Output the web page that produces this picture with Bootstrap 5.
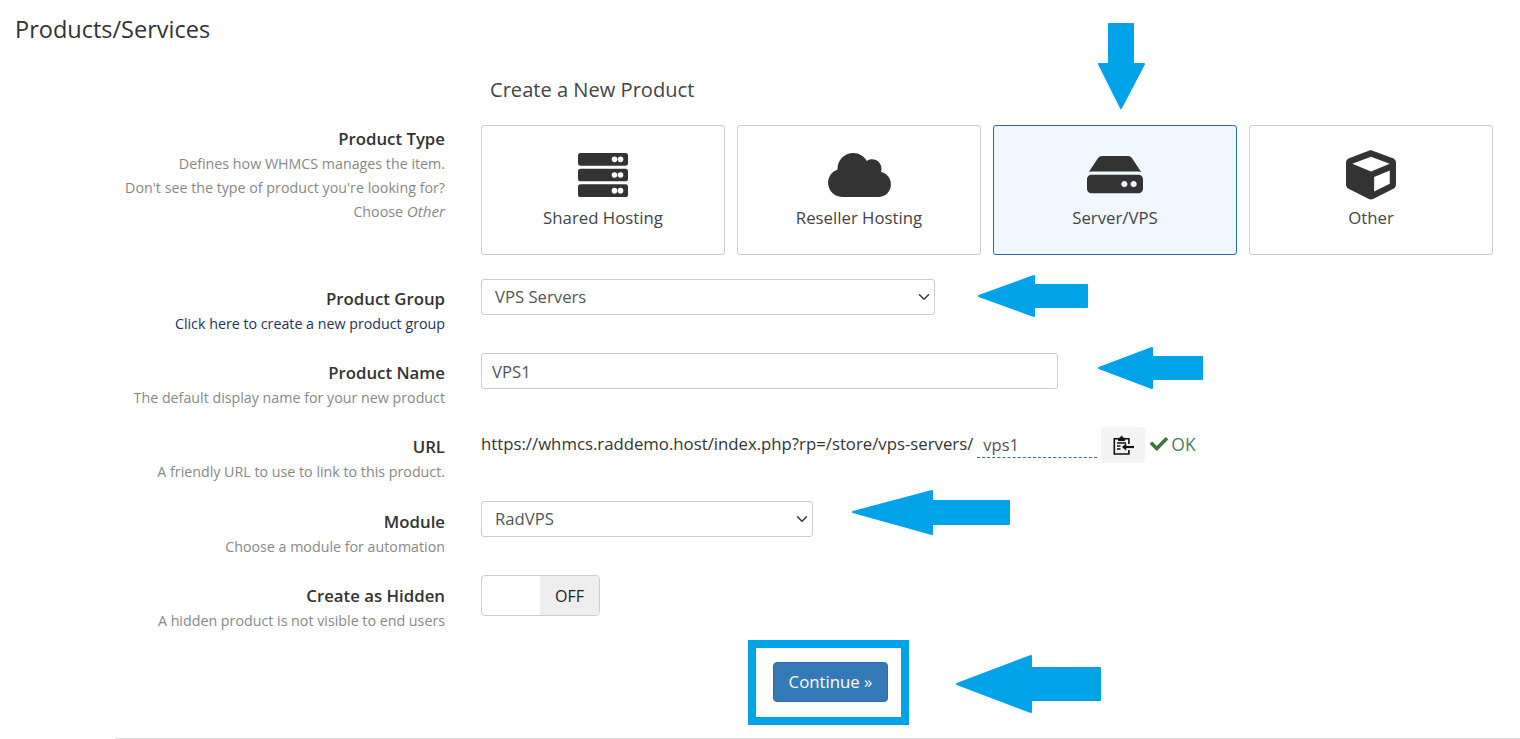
<!DOCTYPE html>
<html lang="en">
<head>
<meta charset="utf-8">
<title>Products/Services</title>
<link href="https://cdn.jsdelivr.net/npm/bootstrap@5.3.0/dist/css/bootstrap.min.css" rel="stylesheet">
<style>
html,body{height:739px;overflow:hidden;background:#fff}
body{font-family:"Open Sans",sans-serif;color:#333;font-size:16.8px;position:relative}
.page-title{font-size:23.5px;font-weight:400;line-height:34px;margin:0;padding:12px 0 0 15px;color:#333}
.form-area{margin-left:115px;padding-right:27px}
.new-title{font-size:20.1px;font-weight:400;line-height:28px;margin:30px 0 21px 375px;color:#444}
.frow{height:74px}
.frow-types{height:154px}
.frow-last{height:65px}
.lblcol{width:330px;flex:none;margin-right:36px;padding-top:7px;text-align:right;line-height:24px}
.lbl-top{padding-top:1px}
.lbl-low{padding-top:8px}
.lbl-name{font-weight:600;font-size:16.8px;color:#333;display:block;line-height:26px}
.lbl-sub{font-size:14.25px;color:#888;display:block;line-height:24px}
.lbl-sub em{font-size:15.2px;line-height:1}
.lbl-link{font-size:14.25px;color:#25305a;text-decoration:none;display:block;line-height:24px}
.fieldcol{flex:1;min-width:0}
.type-grid{display:grid;grid-template-columns:repeat(4,244px);gap:12px}
.type-tile{height:130px;border-color:#ccc;border-radius:3px;align-items:center;padding-top:24px;color:#444;font-size:16.8px}
.type-tile.is-picked{background:#f0f7ff;border-color:#2f6a9e}
.type-ico{height:50px;display:flex;align-items:center;justify-content:center}
.type-ico svg{display:block;fill:#333}
.type-lbl{line-height:24px;margin-top:6px}
.field-ctl{height:36px;border-color:#ccc;border-radius:3px;color:#555;font-size:16.7px;padding:0 13px;box-shadow:none}
.form-select.field-ctl{background-position:right 4px center;background-size:12px}
.w-group{width:454px}
.w-name{width:577px;padding-left:10px}
.w-module{width:332px}
.url-line{height:36px;font-size:16.75px;color:#333}
.url-text{margin-top:-2px}
.slug-input{width:120px;height:25px;margin:0 4px;padding:0 6px;border:0;border-bottom:1px dashed #2f6a9e;border-radius:0;font-size:16.5px;color:#555}
.copy-btn{width:44px;height:36px;padding:0;background:#f4f4f4;border-color:#f4f4f4;border-radius:3px;display:flex;align-items:center;justify-content:center}
.ok-note{margin-left:5px;font-size:17.5px;gap:3px;margin-top:-2px}
.ok-note span{color:#4d7f5d}
.hide-switch{width:119px;height:41px;border:1px solid #ccc;border-radius:4px;overflow:hidden;background:#fff}
.switch-blank{width:58px}
.switch-off{width:59px;background:#eee;color:#222;font-size:16px}
.go-frame{width:161px;height:85px;border:8px solid #00a2e8;margin-left:748px;padding:14px 0 0 17px}
.go-btn{width:115px;height:40px;padding:0;background:#337ab7;border-color:#2e6da4;border-radius:4px;font-size:16.8px;color:#fff}
.end-rule{margin:13px 0 0 115px;border:0;border-top:1px solid #ddd;opacity:1}
.callouts{position:absolute;left:0;top:0;width:1520px;height:739px;pointer-events:none}
.callouts polygon{fill:#00a2e8;stroke:#00a2e8;stroke-width:2;stroke-linejoin:round}
</style>
</head>
<body>
<h1 class="page-title">Products/Services</h1>
<div class="form-area">
  <h2 class="new-title">Create a New Product</h2>

  <div class="frow frow-types d-flex">
    <div class="lblcol lbl-top">
      <span class="lbl-name">Product Type</span>
      <span class="lbl-sub">Defines how WHMCS manages the item.</span>
      <span class="lbl-sub">Don't see the type of product you're looking for?</span>
      <span class="lbl-sub">Choose <em>Other</em></span>
    </div>
    <div class="fieldcol">
      <div class="type-grid">
        <div class="card type-tile">
          <div class="type-ico"><svg width="50" height="44" viewBox="0 0 50 44"><rect width="50" height="12.7" rx="2.6"/><rect y="15.65" width="50" height="12.7" rx="2.6"/><rect y="31.3" width="50" height="12.7" rx="2.6"/><g style="fill:#fff"><circle cx="36.5" cy="6.35" r="2.8"/><circle cx="42.5" cy="6.35" r="2.8"/><circle cx="36.5" cy="22" r="2.8"/><circle cx="42.5" cy="22" r="2.8"/><circle cx="36.5" cy="37.65" r="2.8"/><circle cx="42.5" cy="37.65" r="2.8"/></g></svg></div>
          <div class="type-lbl">Shared Hosting</div>
        </div>
        <div class="card type-tile">
          <div class="type-ico"><svg width="63" height="44" viewBox="0 32 640 448"><path d="M537.6 226.6c4.1-10.7 6.4-22.4 6.4-34.6 0-53-43-96-96-96-19.7 0-38.1 6-53.3 16.2C367 64.2 315.3 32 256 32c-88.4 0-160 71.6-160 160 0 2.7.1 5.4.2 8.1C40.2 219.8 0 273.2 0 336c0 79.5 64.5 144 144 144h368c70.7 0 128-57.3 128-128 0-61.9-44-113.6-102.4-125.4z"/></svg></div>
          <div class="type-lbl">Reseller Hosting</div>
        </div>
        <div class="card type-tile is-picked">
          <div class="type-ico"><svg width="56" height="37.4" viewBox="0 64 576 384"><path d="M576 304v96c0 26.51-21.49 48-48 48H48c-26.51 0-48-21.49-48-48v-96c0-26.51 21.49-48 48-48h480c26.51 0 48 21.49 48 48zm-48-80a79.557 79.557 0 0 1 30.777 6.165L462.25 85.374A48.003 48.003 0 0 0 422.311 64H153.689a48 48 0 0 0-39.938 21.374L17.223 230.165A79.557 79.557 0 0 1 48 224h480zm-48 96c-17.673 0-32 14.327-32 32s14.327 32 32 32 32-14.327 32-32-14.327-32-32-32zm-96 0c-17.673 0-32 14.327-32 32s14.327 32 32 32 32-14.327 32-32-14.327-32-32-32z"/></svg></div>
          <div class="type-lbl">Server/VPS</div>
        </div>
        <div class="card type-tile">
          <div class="type-ico"><svg width="50" height="50" viewBox="0 0 512 512"><path d="M239.1 6.3l-208 78c-18.7 7-31.1 25-31.1 45v225.1c0 18.2 10.3 34.8 26.5 42.9l208 104c13.5 6.8 29.4 6.8 42.9 0l208-104c16.3-8.1 26.5-24.8 26.5-42.9V129.3c0-20-12.4-37.9-31.1-44.9l-208-78C262 2.2 250 2.2 239.1 6.3zM256 68.4l192 72v1.1l-192 78-192-78v-1.1l192-72zm32 356V275.5l160-65v133.9l-160 80z"/></svg></div>
          <div class="type-lbl">Other</div>
        </div>
      </div>
    </div>
  </div>

  <div class="frow d-flex">
    <div class="lblcol">
      <span class="lbl-name">Product Group</span>
      <a class="lbl-link" href="#">Click here to create a new product group</a>
    </div>
    <div class="fieldcol"><select class="form-select field-ctl w-group"><option>VPS Servers</option></select></div>
  </div>

  <div class="frow d-flex">
    <div class="lblcol">
      <span class="lbl-name">Product Name</span>
      <span class="lbl-sub">The default display name for your new product</span>
    </div>
    <div class="fieldcol"><input class="form-control field-ctl w-name" value="VPS1"></div>
  </div>

  <div class="frow d-flex">
    <div class="lblcol">
      <span class="lbl-name">URL</span>
      <span class="lbl-sub">A friendly URL to use to link to this product.</span>
    </div>
    <div class="fieldcol">
      <div class="url-line d-flex align-items-center">
        <span class="url-text">https://whmcs.raddemo.host/index.php?rp=/store/vps-servers/</span>
        <input class="form-control slug-input" value="vps1">
        <button type="button" class="btn copy-btn">
          <svg width="22" height="20" viewBox="0 0 22 20" fill="none" stroke="#111" stroke-width="1.6"><path d="M6.5 3.8H2.3v15.2h14.6v-4M16.9 9V3.8h-4.2"/><path d="M6.5 5.6V3.2h1.7L9.6.9l1.4 2.3h1.7v2.4z" fill="#111" stroke-width="1"/><path d="M5 8h9M5 11h3.5M5 14h3.5" stroke-width="1.4"/><path d="M22 12H13" stroke-width="2.2"/><path d="M14.2 8.2 10 12l4.2 3.8z" fill="#111" stroke="none"/></svg>
        </button>
        <span class="ok-note d-flex align-items-center"><svg width="18" height="18" viewBox="0 0 512 512" fill="#3c763d"><path d="M173.898 439.404l-166.4-166.4c-9.997-9.997-9.997-26.206 0-36.204l36.203-36.204c9.997-9.998 26.207-9.998 36.204 0L192 312.69 432.095 72.596c9.997-9.997 26.207-9.997 36.204 0l36.203 36.204c9.997 9.997 9.997 26.206 0 36.204l-294.4 294.401c-9.998 9.997-26.207 9.997-36.204-.001z"/></svg><span>OK</span></span>
      </div>
    </div>
  </div>

  <div class="frow d-flex">
    <div class="lblcol lbl-low">
      <span class="lbl-name">Module</span>
      <span class="lbl-sub">Choose a module for automation</span>
    </div>
    <div class="fieldcol"><select class="form-select field-ctl w-module"><option>RadVPS</option></select></div>
  </div>

  <div class="frow frow-last d-flex">
    <div class="lblcol lbl-low">
      <span class="lbl-name">Create as Hidden</span>
      <span class="lbl-sub">A hidden product is not visible to end users</span>
    </div>
    <div class="fieldcol">
      <div class="hide-switch d-flex">
        <div class="switch-blank"></div>
        <div class="switch-off flex-grow-1 d-flex align-items-center justify-content-center">OFF</div>
      </div>
    </div>
  </div>
</div>
<div class="go-frame"><button type="button" class="btn btn-primary go-btn">Continue »</button></div>
<hr class="end-rule">

<svg class="callouts" viewBox="0 0 1520 739" aria-hidden="true">
  <polygon points="1109,24 1133,24 1133,64 1144,64 1121,108 1099,64 1109,64"/>
  <polygon points="979,296 1034,276 1034,285 1087,285 1087,307 1034,307 1034,316"/>
  <polygon points="1099,368 1152,348 1152,357 1202,357 1202,379 1152,379 1152,388"/>
  <polygon points="853,512 932,491 932,501 1009,501 1009,524 932,524 932,534"/>
  <polygon points="957,684 1031,656 1031,668 1100,668 1100,700 1031,700 1031,712"/>
</svg>
<script src="https://cdn.jsdelivr.net/npm/bootstrap@5.3.0/dist/js/bootstrap.bundle.min.js"></script>
</body>
</html>
